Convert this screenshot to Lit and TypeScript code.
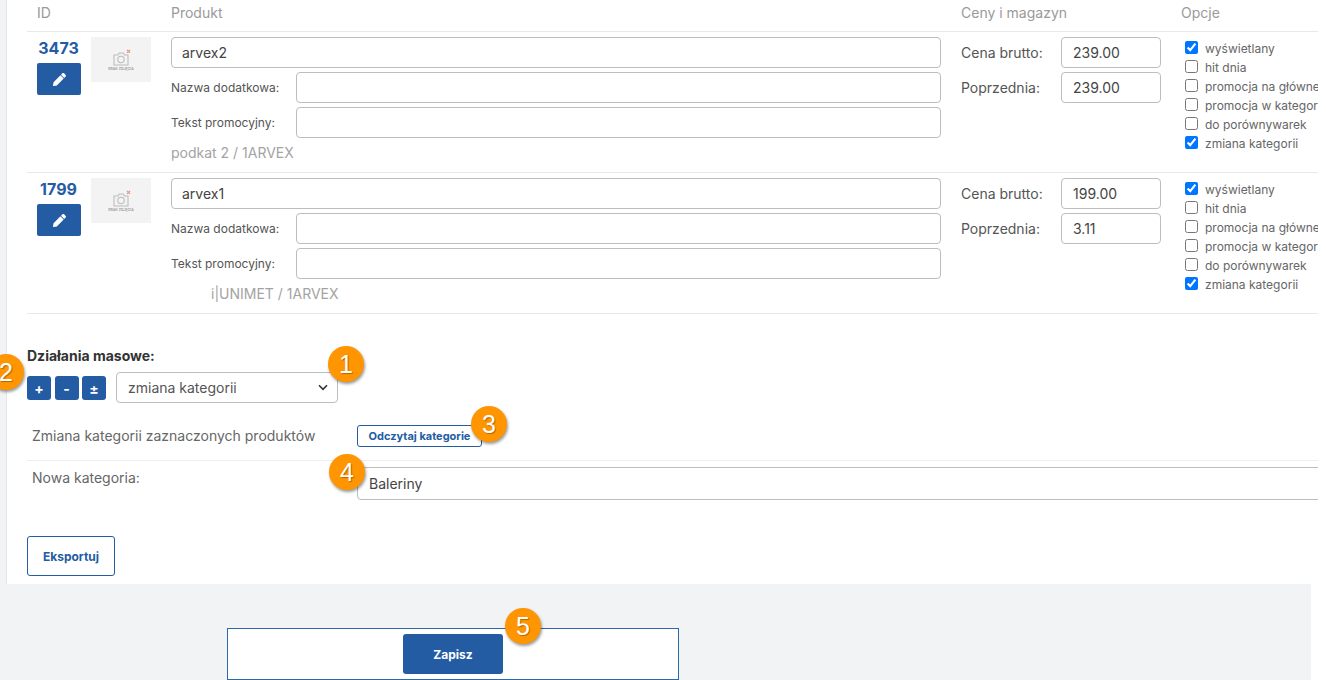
import { LitElement, html, css, svg } from "lit";
import { customElement } from "lit/decorators.js";

const PENCIL = svg`<path fill="currentColor" d="M497.9 142.1l-46.1 46.1c-4.7 4.7-12.3 4.7-17 0l-111-111c-4.7-4.7-4.7-12.3 0-17l46.1-46.1c18.7-18.7 49.1-18.7 67.9 0l60.1 60.1c18.8 18.7 18.8 49.1 0 67.9zM284.2 99.8L21.6 362.4.4 483.9c-2.9 16.4 11.4 30.6 27.8 27.8l121.5-21.3 262.6-262.6c4.7-4.7 4.7-12.3 0-17l-111-111c-4.8-4.7-12.4-4.7-17.1 0z"/>`;

interface Row {
  id: string; name: string; cat: string; shift: boolean; price: string; prev: string;
}
const ROWS: Row[] = [
  { id: "3473", name: "arvex2", cat: "podkat 2 / 1ARVEX", shift: false, price: "239.00", prev: "239.00" },
  { id: "1799", name: "arvex1", cat: "i|UNIMET / 1ARVEX", shift: true, price: "199.00", prev: "3.11" },
];
const OPTS: [string, boolean][] = [
  ["wyświetlany", true], ["hit dnia", false], ["promocja na głównej", false],
  ["promocja w kategorii", false], ["do porównywarek", false], ["zmiana kategorii", true],
];
const BADGES: [string, string][] = [
  ["1", "b1"], ["2", "b2"], ["3", "b3"], ["4", "b4"], ["5", "b5"],
];

@customElement("app-root")
export class AppRoot extends LitElement {
  static styles = css`
    :host { display: block; position: relative; width: 1326px; height: 680px; overflow: hidden; background: #fff; font-family: Inter, "Liberation Sans", sans-serif; color: #555; }
    .page { width: 1311px; height: 680px; background: #f2f3f5; }
    .card { box-sizing: border-box; width: 1312px; height: 584px; margin-left: 6px; border-left: 1px solid #e6e6e6; background: #fff; padding-left: 20px; }
    .content { width: 1291px; overflow: hidden; height: 584px; }
    .grid { display: grid; grid-template-columns: 64px 80px 790px 224px 133px; }
    .head { height: 31px; border-bottom: 1px solid #e8e8e8; font-size: 14px; color: #9a9a9a; line-height: 26px; }
    .head .id { padding-left: 10px; }
    .head .opt { margin-left: -4px; }
    .row { height: 135px; padding-top: 5px; border-bottom: 1px solid #e8e8e8; }
    .idcol { padding-left: 10px; display: flex; flex-direction: column; }
    .num { width: 43px; text-align: center; font-size: 16px; font-weight: 700; color: #245ca3; line-height: 20px; margin-top: 1px; }
    .edit { width: 44px; height: 32px; margin-top: 5px; border-radius: 2px; background: #245ca3; color: #fff; display: flex; align-items: center; justify-content: center; }
    .edit svg { width: 13px; height: 13px; }
    .thumb { width: 60px; height: 45px; background: #f3f3f3; display: flex; flex-direction: column; align-items: center; justify-content: center; }
    .thumb svg { width: 18px; height: 17px; margin: 2px 0 0 2px; }
    .thumb span { font-size: 3.5px; line-height: 6px; color: #999; font-weight: 600; }
    .prod { display: flex; flex-direction: column; gap: 4px; width: 770px; }
    .inp { box-sizing: border-box; height: 31px; border: 1px solid #bdbdbd; border-radius: 4px; padding: 0 10px; font-size: 14px; line-height: 29px; color: #444; background: #fff; }
    .field { display: flex; align-items: center; font-size: 12px; color: #555; }
    .field label { width: 125px; flex: none; }
    .field .inp { flex: 1; }
    .cat { font-size: 14px; color: #a3a3a3; margin-top: 1px; line-height: 20px; }
    .cat.shift { padding-left: 40px; }
    .price { display: flex; flex-direction: column; gap: 4px; }
    .price .field { font-size: 14px; }
    .price label { width: 100px; }
    .price .inp { flex: none; width: 100px; padding-left: 11px; }
    .opts { display: flex; flex-direction: column; margin-top: 2px; white-space: nowrap; overflow: hidden; }
    .opts label { display: flex; align-items: center; height: 19px; font-size: 12px; color: #666; }
    .opts input { width: 13px; height: 13px; margin: -2px 7px 0 0; }
    .bulk { padding-top: 32px; }
    .bulk h4 { margin: 0; font-size: 14px; font-weight: 700; color: #333; line-height: 20px; }
    .tools { display: flex; align-items: center; margin-top: 6px; }
    .sq { width: 24px; height: 24px; margin-right: 3.5px; margin-top: 1px; border-radius: 3px; background: #245ca3; color: #fff; font-size: 14px; font-weight: 700; display: flex; align-items: center; justify-content: center; }
    .select { box-sizing: border-box; width: 222px; height: 31px; margin-left: 6.5px; border: 1px solid #bdbdbd; border-radius: 4px; display: flex; align-items: center; justify-content: space-between; padding: 0 9px 0 11px; font-size: 14px; color: #555; }
    .select svg { width: 10px; height: 7px; }
    .change { display: flex; align-items: center; height: 38px; margin-top: 19px; padding-left: 5px; border-bottom: 1px solid #eee; font-size: 14px; color: #666; }
    .change .lab { width: 325px; flex: none; margin-top: -12px; }
    .read { box-sizing: border-box; width: 125px; height: 22px; border: 1px solid #245ca3; border-radius: 3px; color: #245ca3; font-size: 11px; font-weight: 700; display: flex; align-items: center; justify-content: center; margin-top: -10px; }
    .newcat { display: flex; padding-left: 5px; font-size: 14px; color: #666; margin-top: 6px; }
    .newcat .lab { width: 325px; flex: none; line-height: 22px; }
    .newcat .inp { flex: 1; height: 33px; line-height: 31px; font-size: 14px; color: #444; padding: 0 11px; margin-right: -30px; }
    .export { box-sizing: border-box; width: 88px; height: 40px; margin-top: 36px; border: 1px solid #245ca3; border-radius: 3px; color: #245ca3; font-size: 12px; font-weight: 700; display: flex; align-items: center; justify-content: center; }
    .footer { box-sizing: border-box; width: 452px; height: 52px; margin: 44px 0 0 227px; border: 1px solid #2a6aa8; background: #fff; display: flex; justify-content: center; padding-top: 5px; }
    .save { width: 100px; height: 40px; border-radius: 3px; background: #245ca3; color: #fff; font-size: 12px; font-weight: 700; display: flex; align-items: center; justify-content: center; }
    .badge { position: absolute; box-sizing: border-box; width: 36px; height: 36px; border-radius: 50%; background: #ff9500; color: #fff; font-family: "Liberation Sans", Arial, sans-serif; font-size: 25px; line-height: 36px; text-align: center; box-shadow: 1px 2px 3px rgba(0,0,0,.4); text-shadow: 1px 1px 1px rgba(0,0,0,.3); }
    .b1 { left: 328px; top: 346px; }
    .b2 { left: -12px; top: 354px; }
    .b3 { left: 471px; top: 406px; }
    .b4 { left: 329px; top: 454px; }
    .b5 { left: 505px; top: 608px; }
  `;

  private renderRow(r: Row) {
    return html`<div class="grid row">
      <div class="idcol">
        <div class="num">${r.id}</div>
        <div class="edit"><svg viewBox="0 0 512 512">${PENCIL}</svg></div>
      </div>
      <div class="thumb">
        <svg viewBox="0 0 18 17" fill="none" stroke="#bcbcbc" stroke-width="1.1">
          <path d="M1 6h4l1.2-2h4l1.2 2h3.6v10h-14z"/><circle cx="8" cy="10.5" r="3.2"/>
          <path d="M14 .8l3 3m0-3l-3 3" stroke="#e8937f" stroke-width="1.2"/>
        </svg>
        <span>BRAK ZDJĘCIA</span>
      </div>
      <div class="prod">
        <div class="inp">${r.name}</div>
        <div class="field"><label>Nazwa dodatkowa:</label><div class="inp"></div></div>
        <div class="field"><label>Tekst promocyjny:</label><div class="inp"></div></div>
        <div class="cat ${r.shift ? "shift" : ""}">${r.cat}</div>
      </div>
      <div class="price">
        <div class="field"><label>Cena brutto:</label><div class="inp">${r.price}</div></div>
        <div class="field"><label>Poprzednia:</label><div class="inp">${r.prev}</div></div>
      </div>
      <div class="opts">
        ${OPTS.map(([t, c]) => html`<label><input type="checkbox" ?checked=${c} />${t}</label>`)}
      </div>
    </div>`;
  }

  render() {
    return html`<div class="page">
      <div class="card"><div class="content">
        <div class="grid head">
          <div class="id">ID</div><div></div><div>Produkt</div><div>Ceny i magazyn</div><div class="opt">Opcje</div>
        </div>
        ${ROWS.map((r) => this.renderRow(r))}
        <div class="bulk">
          <h4>Działania masowe:</h4>
          <div class="tools">
            <div class="sq">+</div><div class="sq">-</div><div class="sq">±</div>
            <div class="select">zmiana kategorii
              <svg viewBox="0 0 10 7" fill="none" stroke="#333" stroke-width="1.6"><path d="M1 1.3l4 4 4-4"/></svg>
            </div>
          </div>
          <div class="change"><div class="lab">Zmiana kategorii zaznaczonych produktów</div><div class="read">Odczytaj kategorie</div></div>
          <div class="newcat"><div class="lab">Nowa kategoria:</div><div class="inp">Baleriny</div></div>
          <div class="export">Eksportuj</div>
        </div>
      </div></div>
      <div class="footer"><div class="save">Zapisz</div></div>
    </div>
    ${BADGES.map(([n, c]) => html`<div class="badge ${c}">${n}</div>`)}`;
  }
}
